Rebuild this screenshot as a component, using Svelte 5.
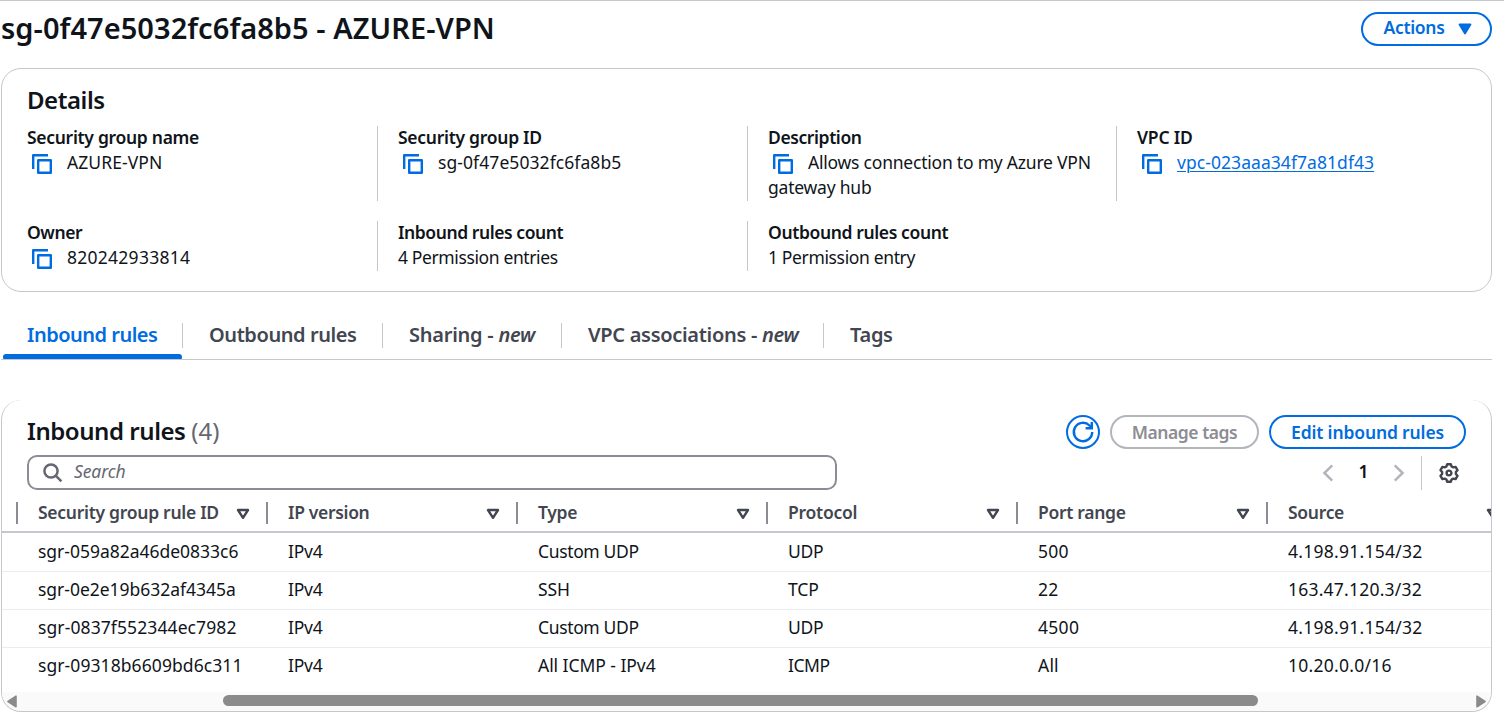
<script>
  const details = [
    { label: 'Security group name', value: 'AZURE-VPN', copy: true, ls: -0.3, vs: 0.08 },
    { label: 'Security group ID', value: 'sg-0f47e5032fc6fa8b5', copy: true, ls: -0.28, vs: 0.08 },
    { label: 'Description', value: 'Allows connection to my Azure VPN gateway hub', copy: true, ls: -0.4, vs: -0.22 },
    { label: 'VPC ID', value: 'vpc-023aaa34f7a81df43', copy: true, link: true, ls: -0.2, vs: 0.06 },
    { label: 'Owner', value: '820242933814', copy: true, ls: -0.4, vs: 0.26 },
    { label: 'Inbound rules count', value: '4 Permission entries', ls: -0.43, vs: -0.38 },
    { label: 'Outbound rules count', value: '1 Permission entry', ls: -0.38, vs: -0.36 }
  ];
  const tabs = [
    { name: 'Inbound rules', width: 182, ls: -0.5 },
    { name: 'Outbound rules', width: 200, ls: -0.42 },
    { name: 'Sharing - ', isNew: true, width: 179, ls: -0.25 },
    { name: 'VPC associations - ', isNew: true, width: 262, ls: -0.3 },
    { name: 'Tags', width: 120, ls: -0.3 }
  ];
  const columns = [
    { name: 'Security group rule ID', ls: -0.28 },
    { name: 'IP version', ls: -0.33 },
    { name: 'Type', ls: -0.3 },
    { name: 'Protocol', ls: -0.25 },
    { name: 'Port range', ls: -0.3 },
    { name: 'Source', ls: -0.3 }
  ];
  const rows = [
    ['sgr-059a82a46de0833c6', 'IPv4', 'Custom UDP', 'UDP', '500', '4.198.91.154/32'],
    ['sgr-0e2e19b632af4345a', 'IPv4', 'SSH', 'TCP', '22', '163.47.120.3/32'],
    ['sgr-0837f552344ec7982', 'IPv4', 'Custom UDP', 'UDP', '4500', '4.198.91.154/32'],
    ['sgr-09318b6609bd6c311', 'IPv4', 'All ICMP - IPv4', 'ICMP', 'All', '10.20.0.0/16']
  ];
  const cellSpacing = [
    [-0.02, -0.2, -0.36, -0.3, 0.3, 0.25],
    [-0.02, -0.2, -0.1, -0.1, 0.3, 0.22],
    [0.1, -0.2, -0.36, -0.3, 0.3, 0.25],
    [0.08, -0.2, -0.05, -0.45, 0.2, 0.26]
  ];
</script>

{#snippet copyIcon()}
  <svg class="copy" width="20" height="20" viewBox="0 0 20 20" fill="none" stroke="#006ce0" stroke-width="2.4" stroke-linejoin="round">
    <path d="M1.2 15V1.2H16" />
    <path d="M6.2 6.2H18.8V18.8H6.2Z" />
  </svg>
{/snippet}

<div class="page">
  <header>
    <h1>sg-0f47e5032fc6fa8b5 - AZURE-VPN</h1>
    <button class="btn actions">Actions
      <svg width="14" height="12" viewBox="0 0 14 12"><path d="M1.5 1.5H12.5L7 10.5Z" fill="#006ce0" stroke="#006ce0" stroke-width="1.8" stroke-linejoin="round" /></svg>
    </button>
  </header>

  <section class="card details">
    <h2>Details</h2>
    <div class="grid">
      {#each details as d}
        <div class="field">
          <div class="label" style="letter-spacing:{d.ls}px">{d.label}</div>
          <div class="value" style="letter-spacing:{d.vs}px">{#if d.copy}{@render copyIcon()}{/if}{#if d.link}<a href="#vpc">{d.value}</a>{:else}{d.value}{/if}</div>
        </div>
      {/each}
    </div>
  </section>

  <nav>
    {#each tabs as t, i}
      <div class="tab" class:active={i === 0} style="width:{t.width}px;letter-spacing:{t.ls}px"><span>{t.name}{#if t.isNew}<i>new</i>{/if}</span></div>
    {/each}
  </nav>

  <section class="card rules">
    <div class="top">
      <h2>Inbound rules <span>(4)</span></h2>
      <div class="buttons">
        <button class="btn round" aria-label="Refresh">
          <svg width="24" height="24" viewBox="0 0 24 24" fill="none" stroke="#006ce0" stroke-width="2.4"><path d="M21.2 12A9.2 9.2 0 1 1 18.5 5.5L20.4 7.6" /><path d="M20.8 2V8.2H14.6" /></svg>
        </button>
        <button class="btn disabled">Manage tags</button>
        <button class="btn edit">Edit inbound rules</button>
      </div>
    </div>
    <div class="filter">
      <div class="search">
        <svg width="20" height="20" viewBox="0 0 20 20" fill="none" stroke="#656871" stroke-width="2.5"><circle cx="8" cy="8" r="6.6" /><path d="M12.7 12.7L18.4 18.4" /></svg>
        <span>Search</span>
      </div>
      <div class="pager">
        <svg width="12" height="18" viewBox="0 0 12 18" fill="none" stroke="#b4b4bb" stroke-width="2.5"><path d="M10.2 1.4L2.4 9L10.2 16.6" /></svg>
        <b>1</b>
        <svg width="12" height="18" viewBox="0 0 12 18" fill="none" stroke="#b4b4bb" stroke-width="2.5"><path d="M1.8 1.4L9.6 9L1.8 16.6" /></svg>
        <div class="gear">
          <svg width="20" height="20" viewBox="0 0 20 20" fill="none" stroke="#424650" stroke-width="2.4" stroke-linejoin="round">
            <path d="M8.2 1.2H11.8L12.6 3.5L14.2 4.4L16.6 3.9L18.5 7.2L16.9 9.1V10.9L18.5 12.8L16.6 16.1L14.2 15.6L12.6 16.5L11.8 18.8H8.2L7.4 16.5L5.8 15.6L3.4 16.1L1.5 12.8L3.1 10.9V9.1L1.5 7.2L3.4 3.9L5.8 4.4L7.4 3.5Z" />
            <circle cx="10" cy="10" r="2.4" />
          </svg>
        </div>
      </div>
    </div>
    <div class="table">
      <div class="row head">
        {#each columns as c}
          <div class="th"><span style="letter-spacing:{c.ls}px">{c.name}</span>
            <svg width="14" height="12" viewBox="0 0 14 12" fill="none" stroke="#424650" stroke-width="2.4" stroke-linejoin="round"><path d="M2 2H12L7 9.8Z" /></svg>
          </div>
        {/each}
      </div>
      {#each rows as r, n}
        <div class="row">
          {#each r as cell, i}<div class="td" style="letter-spacing:{cellSpacing[n][i]}px">{cell}</div>{/each}
        </div>
      {/each}
    </div>
    <div class="scroll">
      <svg width="10" height="13" viewBox="0 0 10 13"><path d="M9 1.2V11.8L1 6.5Z" fill="#8b8b8b" stroke="#8b8b8b" stroke-width="1.6" stroke-linejoin="round" /></svg>
      <div class="track"><div class="thumb"></div></div>
      <svg width="10" height="13" viewBox="0 0 10 13"><path d="M1 1.2V11.8L9 6.5Z" fill="#8b8b8b" stroke="#8b8b8b" stroke-width="1.6" stroke-linejoin="round" /></svg>
    </div>
  </section>
</div>

<style>
  :global(body) { background: #fff; overflow: hidden; }
  .page { box-sizing: border-box; width: 1504px; height: 724px; border-top: 1px solid #c6c6cd; padding: 0 12px 0 1px; font: 17.5px/25px "Noto Sans", sans-serif; color: #0f141a; overflow: hidden; }
  h1, h2 { margin: 0; font-weight: 650; white-space: nowrap; }
  header { display: flex; justify-content: space-between; align-items: flex-start; height: 67px; }
  h1 { font-size: 29px; line-height: 36px; padding-top: 9px; letter-spacing: 0.06px; }
  .btn { box-sizing: border-box; height: 34px; border: 2px solid #006ce0; border-radius: 17px; background: #fff; color: #006ce0; font: 600 17.5px/25px "Noto Sans", sans-serif; padding: 0; display: flex; align-items: center; justify-content: center; letter-spacing: -0.2px; white-space: nowrap; }
  .actions { width: 131px; margin-top: 11px; gap: 13px; padding: 0 0 3px 2px; letter-spacing: -0.3px; }
  .actions svg { margin-top: 3px; }
  .card { box-sizing: border-box; border: 1px solid #c6c6cd; border-radius: 20px; overflow: hidden; }
  .details { height: 224px; padding: 16px 25px 0; }
  h2 { font-size: 24px; line-height: 30px; letter-spacing: -0.45px; }
  .grid { display: grid; grid-template-columns: 350px 370px 369px 1fr; row-gap: 20px; margin-top: 11px; }
  .field { box-sizing: border-box; height: 75px; border-left: 1px solid #c6c6cd; padding-left: 20px; }
  .field:nth-child(n + 5) { height: 50px; }
  .field:nth-child(4n + 1) { border: 0; padding: 0; }
  .field:nth-child(3) .value { width: 340px; }
  .label { font-weight: 600; margin-top: -1px; }
  a { color: #006ce0; text-decoration: underline; text-underline-offset: 2px; text-decoration-thickness: 1px; }
  .copy { margin: 0 15px 0 5px; vertical-align: -5px; height: 20px; display: inline-block; }
  .field:not(:nth-child(3)) .value { white-space: nowrap; }
  nav { display: flex; height: 67px; border-bottom: 1px solid #c6c6cd; font-size: 20px; font-weight: 600; color: #424650; }
  .tab { box-sizing: border-box; position: relative; padding: 31px 0 0 26px; white-space: nowrap; }
  .tab span { display: block; height: 25px; line-height: 23px; border-right: 1px solid #c6c6cd; }
  .tab:last-child span { border: 0; }
  .active { color: #006ce0; }
  .active::after { content: ''; position: absolute; left: 2px; right: 1px; bottom: 0; height: 5px; border-radius: 3px 3px 1px 1px; background: #006ce0; }
  .rules { height: 312px; margin-top: 40px; border-top-width: 0; }
  .top { display: flex; justify-content: space-between; padding: 15px 25px 0; height: 34px; }
  .top h2 { line-height: 31px; }
  .top h2 span { font-weight: 400; color: #656871; letter-spacing: 0; }
  .buttons { display: flex; gap: 10px; }
  .round { width: 34px; }
  .disabled { width: 149px; border-color: #b4b4bb; color: #8c8c94; letter-spacing: -0.45px; }
  .edit { width: 197px; letter-spacing: -0.15px; }
  .filter { display: flex; justify-content: space-between; padding: 6px 32px 0 25px; height: 35px; }
  .search { box-sizing: border-box; width: 810px; height: 35px; border: 2px solid #8c8c94; border-radius: 10px; display: flex; align-items: center; gap: 11px; padding-left: 14px; color: #656871; font-style: italic; letter-spacing: -0.1px; }
  .search span { margin-top: -2px; }
  .pager { display: flex; align-items: center; }
  .pager b { width: 59px; text-align: center; font-weight: 600; margin-top: -2px; }
  .gear { display: flex; align-items: center; height: 34px; margin-left: 16px; padding-left: 17px; border-left: 1px solid #c6c6cd; }
  .row { display: flex; width: 1525px; height: 37px; border-bottom: 1px solid #ebebf0; }
  .head { height: 41px; margin-bottom: 1px; border-bottom: 2px solid #c6c6cd; font-weight: 600; color: #424650; }
  .th { box-sizing: border-box; width: 250px; height: 22px; margin: 12px 0 0; border-left: 2px solid #8c8c94; padding: 0 16px 0 20px; display: flex; align-items: center; justify-content: space-between; flex: none; }
  .th:first-child { margin-left: 14px; }
  .th span { margin-top: -1px; }
  .th svg { margin-top: 2px; }
  .td { width: 250px; flex: none; line-height: 37px; margin-top: -1px; white-space: nowrap; }
  .td:first-child { margin-left: 36px; }
  .row:last-child { border-bottom: 0; height: 44px; }
  .scroll { display: flex; align-items: center; height: 19px; background: #fafafa; padding: 0 5px 0 5px; }
  .track { flex: 1; padding-left: 206px; }
  .thumb { width: 1035px; height: 11px; border-radius: 6px; background: #8b8b8b; margin-top: -2px; }
</style>
